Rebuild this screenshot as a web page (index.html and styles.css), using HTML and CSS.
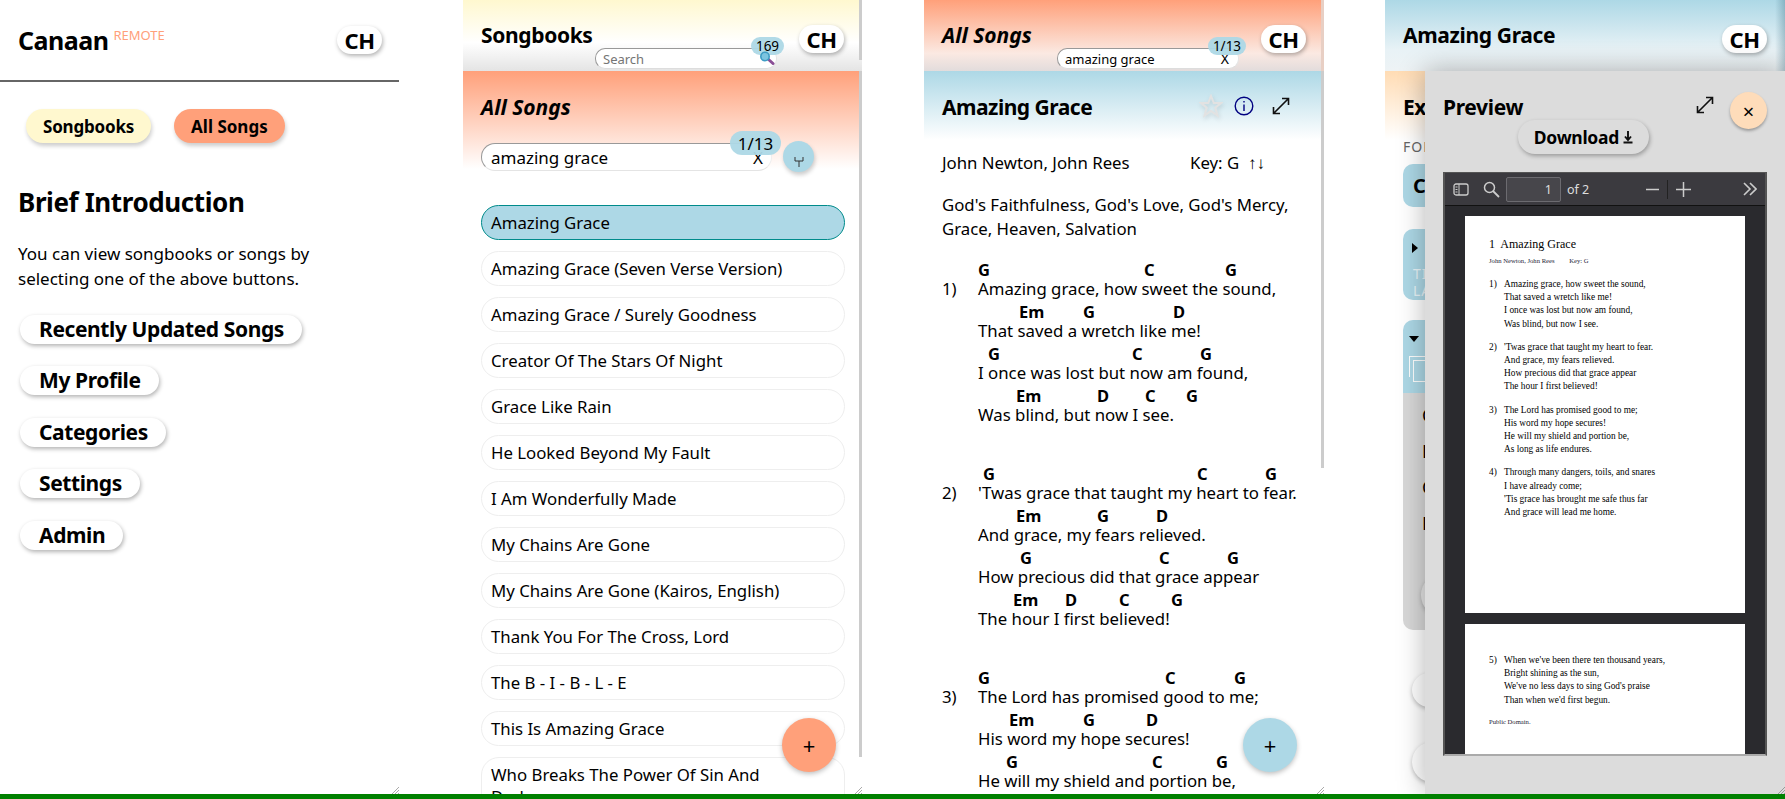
FILE: index.html
```html
<!DOCTYPE html>
<html lang="en">
<head>
  <meta charset="UTF-8" />
  <title>Canaan</title>
  <link rel="stylesheet" href="styles.css">
</head>
<body>
  <div id="panes">

    <!-- home -->
    <section class="pane pane-home">
      <header class="home-head">
        <span class="brand">Canaan</span><sup class="remote">REMOTE</sup>
        <button class="lang">CH</button>
      </header>
      <div class="home-tabs">
        <button class="tab tab-books">Songbooks</button>
        <button class="tab tab-songs">All Songs</button>
      </div>
      <h1 class="intro-title">Brief Introduction</h1>
      <p class="intro-text">You can view songbooks or songs by<br>selecting one of the above buttons.</p>
      <nav class="home-links">
        <a class="pill-link">Recently Updated Songs</a>
        <a class="pill-link">My Profile</a>
        <a class="pill-link">Categories</a>
        <a class="pill-link">Settings</a>
        <a class="pill-link">Admin</a>
      </nav>
      <svg class="grip" width="8" height="8" viewBox="0 0 8 8"><path d="M8 1 1 8M8 4 4 8M8 7 7 8" stroke="#aaa" fill="none"/></svg>
    </section>

    <!-- song list -->
    <section class="pane pane-list">
      <header class="top-bar top-yellow">
        <h2 class="top-title">Songbooks</h2>
        <div class="top-search">
          <input class="mini-input" type="text" placeholder="Search">
          <span class="mini-badge badge-169">169</span>
          <svg class="lens" width="16" height="14" viewBox="0 0 16 14"><path d="M9 8 14 12.500" stroke="#8a4f96" stroke-width="3" stroke-linecap="round"/><circle cx="6" cy="5.500" r="4.200" fill="#7cc4e0" stroke="#3d9cc4" stroke-width="1.600"/></svg>
        </div>
        <button class="lang">CH</button>
      </header>
      <div class="sect-head sect-salmon sect-tall">
        <h2 class="sect-title sect-italic">All Songs</h2>
        <div class="filter-row">
          <div class="filter">
            <input class="filter-input" type="text" value="amazing grace">
            <span class="filter-x">X</span>
            <span class="filter-badge">1/13</span>
          </div>
          <button class="sort-btn"><svg width="10" height="12" viewBox="0 0 10 12"><path d="M1 1V5H9V1M5 5V11" stroke="#333" fill="none"/></svg></button>
        </div>
      </div>
      <ul class="song-list">
        <li class="song song-active">Amazing Grace</li>
        <li class="song">Amazing Grace (Seven Verse Version)</li>
        <li class="song">Amazing Grace / Surely Goodness</li>
        <li class="song">Creator Of The Stars Of Night</li>
        <li class="song">Grace Like Rain</li>
        <li class="song">He Looked Beyond My Fault</li>
        <li class="song">I Am Wonderfully Made</li>
        <li class="song">My Chains Are Gone</li>
        <li class="song">My Chains Are Gone (Kairos, English)</li>
        <li class="song">Thank You For The Cross, Lord</li>
        <li class="song">The B - I - B - L - E</li>
        <li class="song">This Is Amazing Grace</li>
        <li class="song">Who Breaks The Power Of Sin And Darkness</li>
      </ul>
      <span class="thumb thumb-list-top"></span>
      <span class="thumb thumb-list"></span>
      <button class="fab fab-salmon">+</button>
      <svg class="grip" width="8" height="8" viewBox="0 0 8 8"><path d="M8 1 1 8M8 4 4 8M8 7 7 8" stroke="#aaa" fill="none"/></svg>
    </section>

    <!-- song view -->
    <section class="pane pane-song">
      <header class="top-bar top-salmon">
        <h2 class="top-title top-italic">All Songs</h2>
        <div class="top-search">
          <input class="mini-input" type="text" value="amazing grace">
          <span class="mini-x">X</span>
          <span class="mini-badge badge-113">1/13</span>
        </div>
        <button class="lang">CH</button>
      </header>
      <div class="sect-head sect-blue">
        <h2 class="sect-title">Amazing Grace</h2>
        <div class="song-tools">
          <svg class="star" width="24" height="24" viewBox="0 0 24 24"><path d="M12 2 14.800 9H22L16.300 13.600 18.500 21.500 12 17 5.500 21.500 7.700 13.600 2 9H9.200Z" fill="none" stroke="#e2e2e2" stroke-width="2"/></svg>
          <svg width="20" height="20" viewBox="0 0 20 20"><circle cx="10" cy="10" r="8.800" fill="none" stroke="#000080" stroke-width="1.400"/><path d="M10 8.500V15M10 5V6.500" stroke="#000080" stroke-width="1.400"/></svg>
          <svg class="expand" width="18" height="18" viewBox="0 0 18 18"><path d="M1.500 16.500 16.500 1.500M10 1.500H16.500V8M1.500 10V16.500H8" fill="none" stroke="#111" stroke-width="1.600"/></svg>
        </div>
      </div>
      <div class="meta-row"><span class="meta-authors">John Newton, John Rees</span><span>Key: G &nbsp;<span class="swap">↑↓</span></span></div>
      <p class="themes">God's Faithfulness, God's Love, God's Mercy, Grace, Heaven, Salvation</p>

      <div class="verse">
        <span class="verse-num">1)</span>
        <div>
          <div class="lyric-line"><div class="chords"><b style="left:0">G</b><b style="left:166px">C</b><b style="left:247px">G</b></div><div class="lyric">Amazing grace, how sweet the sound,</div></div>
          <div class="lyric-line"><div class="chords"><b style="left:41px">Em</b><b style="left:105px">G</b><b style="left:195px">D</b></div><div class="lyric">That saved a wretch like me!</div></div>
          <div class="lyric-line"><div class="chords"><b style="left:10px">G</b><b style="left:154px">C</b><b style="left:222px">G</b></div><div class="lyric">I once was lost but now am found,</div></div>
          <div class="lyric-line"><div class="chords"><b style="left:38px">Em</b><b style="left:119px">D</b><b style="left:167px">C</b><b style="left:208px">G</b></div><div class="lyric">Was blind, but now I see.</div></div>
        </div>
      </div>
      <div class="verse">
        <span class="verse-num">2)</span>
        <div>
          <div class="lyric-line"><div class="chords"><b style="left:5px">G</b><b style="left:219px">C</b><b style="left:287px">G</b></div><div class="lyric">'Twas grace that taught my heart to fear.</div></div>
          <div class="lyric-line"><div class="chords"><b style="left:38px">Em</b><b style="left:119px">G</b><b style="left:178px">D</b></div><div class="lyric">And grace, my fears relieved.</div></div>
          <div class="lyric-line"><div class="chords"><b style="left:42px">G</b><b style="left:181px">C</b><b style="left:249px">G</b></div><div class="lyric">How precious did that grace appear</div></div>
          <div class="lyric-line"><div class="chords"><b style="left:35px">Em</b><b style="left:87px">D</b><b style="left:141px">C</b><b style="left:193px">G</b></div><div class="lyric">The hour I first believed!</div></div>
        </div>
      </div>
      <div class="verse">
        <span class="verse-num">3)</span>
        <div>
          <div class="lyric-line"><div class="chords"><b style="left:0">G</b><b style="left:187px">C</b><b style="left:256px">G</b></div><div class="lyric">The Lord has promised good to me;</div></div>
          <div class="lyric-line"><div class="chords"><b style="left:31px">Em</b><b style="left:105px">G</b><b style="left:168px">D</b></div><div class="lyric">His word my hope secures!</div></div>
          <div class="lyric-line"><div class="chords"><b style="left:28px">G</b><b style="left:174px">C</b><b style="left:238px">G</b></div><div class="lyric">He will my shield and portion be,</div></div>
        </div>
      </div>
      <span class="thumb thumb-song-top"></span>
      <span class="thumb thumb-song"></span>
      <button class="fab fab-blue">+</button>
      <svg class="grip" width="8" height="8" viewBox="0 0 8 8"><path d="M8 1 1 8M8 4 4 8M8 7 7 8" stroke="#aaa" fill="none"/></svg>
    </section>

    <!-- export + pdf preview -->
    <section class="pane pane-export">
      <header class="top-bar top-blue">
        <h2 class="top-title">Amazing Grace</h2>
        <button class="lang">CH</button>
      </header>
      <div class="sect-head sect-peach">
        <h2 class="sect-title">Export</h2>
      </div>
      <p class="export-note">FORMAT</p>
      <div class="opt-card opt-short"><b>Chords</b></div>
      <div class="opt-card opt-mid">
        <span class="tri tri-right"></span>
        <div class="opt-white">TITLE<br>LAYOUT</div>
      </div>
      <div class="opt-card opt-open">
        <span class="tri tri-down"></span>
        <span class="copy-ico"></span>
      </div>
      <div class="opt-body">
        <div>Chords</div>
        <div>Lyrics</div>
        <div>Columns</div>
        <div>Font</div>
        <span class="opt-circle"></span>
      </div>
      <span class="ghost-pill ghost-one"></span>
      <span class="ghost-pill ghost-two"></span>

      <div class="preview">
        <h2 class="preview-title">Preview</h2>
        <svg class="preview-expand" width="18" height="18" viewBox="0 0 18 18"><path d="M1.500 16.500 16.500 1.500M10 1.500H16.500V8M1.500 10V16.500H8" fill="none" stroke="#111" stroke-width="1.600"/></svg>
        <button class="preview-close">×</button>
        <button class="download">Download <svg width="10" height="14" viewBox="0 0 10 14"><path d="M5 1V9M2 6.500 5 10 8 6.500M0.500 12.500H9.500" fill="none" stroke="#111" stroke-width="1.900"/></svg></button>

        <div class="pdf">
          <div class="pdf-bar">
            <svg width="16" height="13" viewBox="0 0 16 13"><rect x="1" y="1" width="14" height="11" rx="2" fill="none" stroke="#ccc" stroke-width="1.300"/><path d="M6 1V12M2.500 4H4.500M2.500 6.500H4.500M2.500 9H4.500" stroke="#ccc"/></svg>
            <svg class="pdf-find" width="17" height="17" viewBox="0 0 17 17"><circle cx="6.500" cy="6.500" r="5" fill="none" stroke="#ccc" stroke-width="1.500"/><path d="M10 10 16 16" stroke="#ccc" stroke-width="1.800"/></svg>
            <span class="pdf-page">1</span>
            <span class="pdf-of">of 2</span>
            <svg class="pdf-minus" width="13" height="13" viewBox="0 0 13 13"><path d="M0 6.500H13" stroke="#ccc" stroke-width="1.500"/></svg>
            <span class="pdf-sep"></span>
            <svg width="15" height="15" viewBox="0 0 15 15"><path d="M0 7.500H15M7.500 0V15" stroke="#ccc" stroke-width="1.500"/></svg>
            <svg class="pdf-more" width="14" height="14" viewBox="0 0 14 14"><path d="M1 1 7 7 1 13M7 1 13 7 7 13" fill="none" stroke="#ccc" stroke-width="1.600"/></svg>
          </div>
          <div class="pdf-body">
            <div class="pdf-sheet sheet-one">
              <div class="pdf-title">1&nbsp; Amazing Grace</div>
              <div class="pdf-small">John Newton, John Rees <span class="pdf-key">Key: G</span></div>
              <div class="pdf-verse"><span>1)</span><div>Amazing grace, how sweet the sound,<br>That saved a wretch like me!<br>I once was lost but now am found,<br>Was blind, but now I see.</div></div>
              <div class="pdf-verse"><span>2)</span><div>'Twas grace that taught my heart to fear.<br>And grace, my fears relieved.<br>How precious did that grace appear<br>The hour I first believed!</div></div>
              <div class="pdf-verse"><span>3)</span><div>The Lord has promised good to me;<br>His word my hope secures!<br>He will my shield and portion be,<br>As long as life endures.</div></div>
              <div class="pdf-verse"><span>4)</span><div>Through many dangers, toils, and snares<br>I have already come;<br>'Tis grace has brought me safe thus far<br>And grace will lead me home.</div></div>
            </div>
            <div class="pdf-sheet sheet-two">
              <div class="pdf-verse"><span>5)</span><div>When we've been there ten thousand years,<br>Bright shining as the sun,<br>We've no less days to sing God's praise<br>Than when we'd first begun.</div></div>
              <div class="pdf-small pdf-credit">Public Domain.</div>
            </div>
          </div>
        </div>
      </div>
      <svg class="grip grip-top" width="8" height="8" viewBox="0 0 8 8"><path d="M8 1 1 8M8 4 4 8M8 7 7 8" stroke="#999" fill="none"/></svg>
    </section>
  </div>
  <div id="status-bar"></div>
</body>
</html>
```

FILE: styles.css
```css
html, body {
  margin: 0;
  height: 799px;
  overflow: hidden;
  background: white;
  color: black;
  font-family: "Noto Sans", "Open Sans", sans-serif;
}

h1, h2, p, ul {
  margin: 0;
  padding: 0;
}

button {
  font-family: inherit;
  border: none;
  color: black;
  padding: 0;
}

#panes {
  display: flex;
  height: 794px;
}

#status-bar {
  height: 5px;
  background-color: green;
}

.pane {
  position: relative;
  flex: none;
  width: 400px;
  height: 794px;
  overflow: hidden;
  box-sizing: border-box;
}

.pane-home { width: 399px; }
.pane-list { width: 399px; margin-left: 64px; }
.pane-song { margin-left: 62px; }
.pane-export { margin-left: 61px; }

.grip {
  position: absolute;
  right: 0;
  bottom: 0;
}

.grip-top { z-index: 5; }

.lang {
  flex: none;
  width: 45px;
  height: 28px;
  margin-top: 25px;
  border-radius: 14px;
  background: white;
  box-shadow: 1px 2px 4px rgba(0,0,0,0.3);
  font-size: 22px;
  font-weight: 700;
  letter-spacing: -0.4px;
  line-height: 28px;
}

/* home pane */
.home-head {
  display: flex;
  align-items: flex-start;
  height: 82px;
  padding-left: 18px;
  padding-right: 17px;
  border-bottom: 2px solid #666;
  box-sizing: border-box;
}

.brand {
  margin-top: 21px;
  font-size: 25px;
  font-weight: 700;
  letter-spacing: -0.5px;
  line-height: 38px;
}

.remote {
  margin: 26px 0 0 5px;
  color: #ffa07a;
  font-size: 13px;
  line-height: 18px;
}

.home-head .lang {
  margin-left: auto;
  margin-top: 26px;
}

.home-tabs {
  display: flex;
  gap: 23px;
  padding: 27px 0 0 26px;
}

.tab {
  height: 34px;
  padding: 0 17px;
  border-radius: 17px;
  box-shadow: 1px 3px 4px rgba(0,0,0,0.2);
  font-size: 17px;
  font-weight: 700;
  letter-spacing: -0.2px;
}

.tab-books { background: #fff8cf; }
.tab-songs { background: #ffa07a; letter-spacing: 0; }

.intro-title {
  margin: 40px 0 0 18px;
  font-size: 26px;
  font-weight: 700;
  letter-spacing: -0.4px;
  line-height: 38px;
}

.intro-text {
  margin: 21px 0 0 18px;
  font-size: 17px;
  line-height: 24.500px;
}

.home-links {
  display: flex;
  flex-direction: column;
  align-items: flex-start;
  gap: 22.400px;
  margin: 24px 0 0 20px;
}

.pill-link {
  height: 29px;
  padding: 0 18px 0 19px;
  border-radius: 15px;
  background: white;
  box-shadow: 1px 2px 4px rgba(0,0,0,0.3);
  font-size: 21px;
  font-weight: 700;
  letter-spacing: -0.4px;
  line-height: 28px;
}

/* bars on top of panes */
.top-bar {
  display: flex;
  align-items: flex-start;
  height: 71px;
  padding: 0 18px;
  box-sizing: border-box;
}

.top-yellow { background: linear-gradient(#fff8cf, #fff 60%, #e4e4e4); }
.top-salmon { background: linear-gradient(#ffa07a, #fbe9e2 75%, #e2dcdc); }
.top-blue { background: linear-gradient(to left, rgba(60,110,130,0.35), transparent 10px), linear-gradient(#add8e6, #e8f2f6 70%, #eef3f5); }

.top-title {
  margin-top: 20px;
  font-size: 21px;
  font-weight: 700;
  letter-spacing: -0.35px;
  line-height: 30px;
}

.top-italic { font-style: italic; letter-spacing: 0; }

.top-search {
  position: relative;
  width: 182px;
  margin: 48px 0 0 auto;
}

.mini-input {
  display: block;
  width: 100%;
  height: 21px;
  padding: 0 22px 0 7px;
  box-sizing: border-box;
  border: 1px solid;
  border-color: #999 #e4e4e4 #ddd #999;
  border-radius: 10px;
  background: white;
  font-family: inherit;
  font-size: 13px;
  color: black;
  outline: none;
}

.mini-x {
  position: absolute;
  right: 10px;
  top: 2px;
  font-size: 14px;
  line-height: 18px;
}

.mini-badge {
  position: absolute;
  top: -11px;
  height: 18px;
  border-radius: 9px;
  background: rgba(173,216,230,0.95);
  font-size: 13.500px;
  line-height: 19px;
  text-align: center;
}

.badge-169 { right: -7px; width: 33px; }
.badge-113 { right: -7px; width: 38px; }

.lens {
  position: absolute;
  right: 2px;
  top: 3px;
}

.top-search + .lang { margin-left: 22px; }
.top-title + .lang { margin-left: auto; }

/* section under the top bar */
.sect-head {
  position: relative;
  display: flex;
  align-items: flex-start;
  height: 69px;
  padding: 19px 18px 0;
  box-sizing: border-box;
}

.sect-tall {
  display: block;
  height: 101px;
}

.sect-salmon { background: linear-gradient(#ffa07a, #fff 97%); }
.sect-blue { background: linear-gradient(#add8e6, #fff); }
.sect-peach { background: linear-gradient(#ffdcb4, #fff); }

.sect-title {
  font-size: 21px;
  font-weight: 700;
  letter-spacing: -0.5px;
  line-height: 34px;
}

.sect-italic { font-style: italic; letter-spacing: 0; }

.filter-row {
  display: flex;
  gap: 11px;
  margin-top: 1px;
}

.filter {
  position: relative;
  width: 291px;
  margin-top: 18px;
}

.filter-input {
  display: block;
  width: 100%;
  height: 28px;
  padding: 0 30px 0 9px;
  box-sizing: border-box;
  border: 1px solid;
  border-color: #999 #eee #e4e4e4 #999;
  border-radius: 14px;
  background: white;
  font-family: inherit;
  font-size: 17px;
  color: black;
  outline: none;
}

.filter-x {
  position: absolute;
  right: 9px;
  top: 3px;
  font-size: 17px;
  line-height: 24px;
}

.filter-badge {
  position: absolute;
  right: -9px;
  top: -12px;
  width: 51px;
  height: 24px;
  border-radius: 12px;
  background: rgba(173,216,230,0.95);
  font-size: 17px;
  line-height: 26px;
  text-align: center;
}

.sort-btn {
  flex: none;
  width: 31px;
  height: 31px;
  margin-top: 16px;
  border-radius: 50%;
  background: #add8e6;
  box-shadow: 1px 3px 4px rgba(0,0,0,0.2);
}

.sort-btn svg { display: block; margin: 11px auto 0; }

/* song list */
.song-list {
  display: flex;
  flex-direction: column;
  gap: 11px;
  padding: 33px 17px 0 18px;
  list-style: none;
}

.song {
  min-height: 35px;
  padding: 5.500px 9px;
  border: 1px solid #eee;
  border-radius: 18px;
  box-sizing: border-box;
  font-size: 16.800px;
  line-height: 22px;
}

.song-active {
  background: #add8e6;
  border-color: #008b8b;
}

.thumb {
  position: absolute;
  right: 0;
  width: 3px;
  background: #ccc;
}

.thumb-list-top { top: 0; height: 60px; }
.thumb-list { top: 71px; height: 686px; }
.thumb-song-top { top: 0; height: 71px; background: #e8cfc4; }
.thumb-song { top: 71px; height: 397px; }

.fab {
  position: absolute;
  top: 718px;
  width: 54px;
  height: 54px;
  border-radius: 50%;
  box-shadow: 0 2px 5px rgba(0,0,0,0.25);
  font-size: 22px;
  line-height: 54px;
}

.fab-salmon { right: 26px; background: #ffa07a; }
.fab-blue { right: 27px; background: #add8e6; }

/* song view */
.song-tools {
  display: flex;
  align-items: center;
  gap: 18px;
  margin: 4px 0 0 auto;
  padding-right: 16px;
}

.star {
  margin-right: -7px;
  filter: drop-shadow(1px 2px 2px rgba(0,0,0,0.12));
}

.meta-row {
  display: flex;
  margin: 11px 0 0 18px;
  font-size: 16.800px;
  line-height: 24px;
}

.meta-authors { width: 248px; }
.swap { font-size: 17px; font-weight: 700; }

.themes {
  margin: 18px 0 0 18px;
  width: 360px;
  font-size: 16.800px;
  line-height: 24px;
}

.verse {
  display: flex;
  margin: 0 0 36px 18px;
}

.themes + .verse { margin-top: 20px; }

.verse-num {
  flex: none;
  width: 36px;
  margin-top: 16px;
  font-size: 16.800px;
  line-height: 24px;
}

.lyric-line { height: 42px; white-space: nowrap; }

.chords {
  position: relative;
  height: 16px;
}

.chords b {
  position: absolute;
  top: 0;
  font-size: 16.500px;
  font-weight: 700;
  line-height: 18px;
}

.lyric {
  font-size: 16.800px;
  line-height: 24px;
}

/* export pane, mostly covered by the preview */
.export-note {
  margin: -3px 0 0 18px;
  height: 20px;
  color: #666;
  font-size: 14px;
  line-height: 20px;
  letter-spacing: 1px;
}

.opt-card {
  position: relative;
  margin: 7px 18px 0;
  border-radius: 10px;
  background: #add8e6;
}

.opt-short {
  height: 43px;
  padding-left: 10px;
  font-size: 20px;
  line-height: 43px;
}

.opt-mid {
  height: 71px;
  margin-top: 22px;
  padding: 36px 0 0 10px;
  box-sizing: border-box;
}

.opt-white {
  color: #e8f4f8;
  font-size: 14px;
  line-height: 17px;
  letter-spacing: 1px;
}

.opt-open {
  height: 73px;
  margin-top: 20px;
  border-radius: 10px 10px 0 0;
}

.tri {
  position: absolute;
  width: 0;
  height: 0;
}

.tri-right {
  left: 9px;
  top: 14px;
  border-left: 6px solid black;
  border-top: 5px solid transparent;
  border-bottom: 5px solid transparent;
}

.tri-down {
  left: 6px;
  top: 16px;
  border-top: 6px solid black;
  border-left: 5px solid transparent;
  border-right: 5px solid transparent;
}

.copy-ico {
  position: absolute;
  left: 6px;
  top: 36px;
  width: 30px;
  height: 20px;
  border-left: 1px solid white;
  border-top: 1px solid white;
}

.copy-ico::after {
  content: "";
  position: absolute;
  left: 3px;
  top: 3px;
  width: 30px;
  height: 20px;
  border: 1px solid white;
}

.opt-body {
  position: relative;
  height: 237px;
  margin: 0 18px;
  padding: 4px 0 0 19px;
  box-sizing: border-box;
  border-radius: 0 0 10px 10px;
  background: #d8d8d8;
  font-size: 18px;
  line-height: 36px;
}

.opt-circle {
  position: absolute;
  left: 18px;
  top: 180px;
  width: 44px;
  height: 44px;
  border-radius: 50%;
  background: #e4e4e4;
  box-shadow: 0 2px 4px rgba(0,0,0,0.2);
}

.ghost-pill {
  position: absolute;
  left: 27px;
  width: 120px;
  border-radius: 20px;
  background: white;
  box-shadow: 0 2px 4px rgba(0,0,0,0.25);
}

.ghost-one { top: 673px; height: 34px; }
.ghost-two { top: 742px; height: 40px; }

/* pdf preview */
.preview {
  position: absolute;
  left: 40px;
  right: 0;
  top: 71px;
  bottom: 0;
  background: #dcdcdc;
  box-shadow: 0 0 26px rgba(0,0,0,0.3);
}

.preview-title {
  position: absolute;
  left: 18px;
  top: 19px;
  font-size: 21px;
  font-weight: 700;
  letter-spacing: -0.35px;
  line-height: 34px;
}

.preview-expand {
  position: absolute;
  left: 271px;
  top: 25px;
}

.preview-close {
  position: absolute;
  left: 305px;
  top: 21px;
  width: 37px;
  height: 37px;
  border-radius: 50%;
  background: #fedcba;
  box-shadow: 0 2px 3px rgba(0,0,0,0.3);
  font-size: 20px;
  line-height: 40px;
}

.download {
  position: absolute;
  left: 93px;
  top: 49px;
  width: 131px;
  height: 34px;
  border-radius: 17px;
  background: #dcdcdc;
  box-shadow: 1px 2px 4px rgba(0,0,0,0.3);
  font-size: 17.500px;
  font-weight: 700;
  letter-spacing: -0.3px;
  line-height: 34px;
}

.pdf {
  position: absolute;
  left: 18px;
  top: 101px;
  width: 324px;
  height: 584px;
  box-sizing: border-box;
  border: 2px solid #555;
  border-top-width: 1px;
  border-bottom-color: #aaa;
  background: #2a2a2e;
  overflow: hidden;
}

.pdf-bar {
  display: flex;
  align-items: center;
  height: 33px;
  padding-left: 8px;
  background: #3b3a3f;
  border-bottom: 1px solid #111;
  box-sizing: border-box;
  color: #ddd;
  font-size: 12.500px;
}

.pdf-find { margin-left: 14px; }

.pdf-page {
  width: 55px;
  height: 25px;
  margin-left: 6px;
  padding-right: 8px;
  box-sizing: border-box;
  border: 1px solid #6c6b70;
  border-radius: 2px;
  background: #47464b;
  line-height: 24px;
  text-align: right;
}

.pdf-of { margin-left: 6px; }
.pdf-minus { margin-left: 57px; }

.pdf-sep {
  width: 1px;
  height: 19px;
  margin: 0 8px;
  background: #222;
}

.pdf-more { margin-left: 52px; }

.pdf-body {
  padding: 10px 20px 0;
  font-family: "Liberation Serif", serif;
}

.pdf-sheet {
  background: white;
  box-sizing: border-box;
  padding-left: 24px;
}

.sheet-one {
  height: 397px;
  padding-top: 19px;
}

.sheet-two {
  height: 140px;
  margin-top: 11px;
  padding-top: 30px;
}

.pdf-title {
  font-size: 12px;
  line-height: 18px;
}

.pdf-small {
  color: #223;
  font-size: 6.640px;
  line-height: 10px;
  margin-top: 3px;
}

.pdf-key { margin-left: 13px; }

.pdf-verse {
  display: flex;
  margin-bottom: 10px;
  font-size: 9.330px;
  line-height: 13.200px;
}

.pdf-small + .pdf-verse { margin-top: 12px; }
.pdf-verse span { width: 15px; }
.pdf-credit { margin-top: 2px; }
```
